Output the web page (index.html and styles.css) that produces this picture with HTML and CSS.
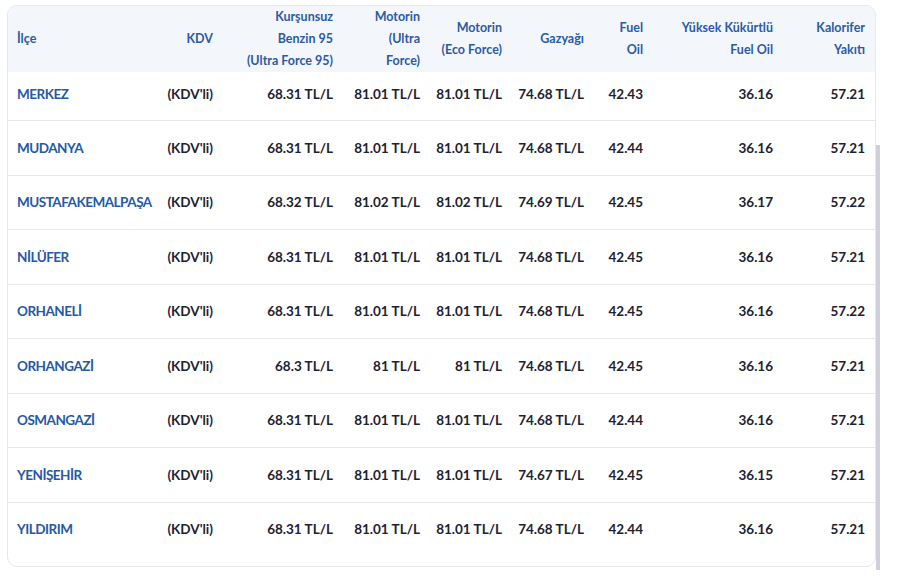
FILE: index.html
```html
<!DOCTYPE html>
<html lang="tr">
<head>
<meta charset="utf-8">
<title>Akaryakıt Fiyatları</title>
<link rel="stylesheet" href="styles.css">
</head>
<body>
<div class="page">
  <div class="card">
    <table class="prices">
      <colgroup>
        <col class="c1"><col class="c2"><col class="c3"><col class="c4"><col class="c5"><col class="c6"><col class="c7"><col class="c8"><col class="c9">
      </colgroup>
      <thead>
        <tr>
          <th class="left">İlçe</th>
          <th>KDV</th>
          <th>Kurşunsuz<br>Benzin 95<br>(Ultra Force 95)</th>
          <th>Motorin<br>(Ultra<br>Force)</th>
          <th>Motorin<br>(Eco Force)</th>
          <th>Gazyağı</th>
          <th>Fuel<br>Oil</th>
          <th>Yüksek Kükürtlü<br>Fuel Oil</th>
          <th>Kalorifer<br>Yakıtı</th>
        </tr>
      </thead>
      <tbody>
        <tr class="first"><td class="name">MERKEZ</td><td>(KDV'li)</td><td>68.31 TL/L</td><td>81.01 TL/L</td><td>81.01 TL/L</td><td>74.68 TL/L</td><td>42.43</td><td>36.16</td><td>57.21</td></tr>
        <tr><td class="name">MUDANYA</td><td>(KDV'li)</td><td>68.31 TL/L</td><td>81.01 TL/L</td><td>81.01 TL/L</td><td>74.68 TL/L</td><td>42.44</td><td>36.16</td><td>57.21</td></tr>
        <tr><td class="name">MUSTAFAKEMALPAŞA</td><td>(KDV'li)</td><td>68.32 TL/L</td><td>81.02 TL/L</td><td>81.02 TL/L</td><td>74.69 TL/L</td><td>42.45</td><td>36.17</td><td>57.22</td></tr>
        <tr><td class="name">NİLÜFER</td><td>(KDV'li)</td><td>68.31 TL/L</td><td>81.01 TL/L</td><td>81.01 TL/L</td><td>74.68 TL/L</td><td>42.45</td><td>36.16</td><td>57.21</td></tr>
        <tr><td class="name">ORHANELİ</td><td>(KDV'li)</td><td>68.31 TL/L</td><td>81.01 TL/L</td><td>81.01 TL/L</td><td>74.68 TL/L</td><td>42.45</td><td>36.16</td><td>57.22</td></tr>
        <tr><td class="name">ORHANGAZİ</td><td>(KDV'li)</td><td>68.3 TL/L</td><td>81 TL/L</td><td>81 TL/L</td><td>74.68 TL/L</td><td>42.45</td><td>36.16</td><td>57.21</td></tr>
        <tr><td class="name">OSMANGAZİ</td><td>(KDV'li)</td><td>68.31 TL/L</td><td>81.01 TL/L</td><td>81.01 TL/L</td><td>74.68 TL/L</td><td>42.44</td><td>36.16</td><td>57.21</td></tr>
        <tr><td class="name">YENİŞEHİR</td><td>(KDV'li)</td><td>68.31 TL/L</td><td>81.01 TL/L</td><td>81.01 TL/L</td><td>74.67 TL/L</td><td>42.45</td><td>36.15</td><td>57.21</td></tr>
        <tr class="last"><td class="name">YILDIRIM</td><td>(KDV'li)</td><td>68.31 TL/L</td><td>81.01 TL/L</td><td>81.01 TL/L</td><td>74.68 TL/L</td><td>42.44</td><td>36.16</td><td>57.21</td></tr>
      </tbody>
    </table>
  </div>
  <div class="scroll-track"><div class="scroll-thumb"></div></div>
</div>
</body>
</html>
```

FILE: styles.css
```css
html, body {
  margin: 0;
  padding: 0;
  background: #ffffff;
}
body {
  font-family: Lato, "Liberation Sans", sans-serif;
  color: #1d2230;
}
.page {
  display: flex;
  align-items: flex-start;
  padding: 5px 0 0 7px;
}
.card {
  width: 867px;
  border: 1px solid #e4e7ec;
  border-radius: 10px;
  overflow: hidden;
  padding-bottom: 10px;
  background: #fff;
}
.scroll-track {
  width: 4px;
  padding-top: 140px;
}
.scroll-thumb {
  width: 4px;
  height: 425px;
  background: #cfd0da;
}
.prices {
  width: 867px;
  table-layout: fixed;
  border-collapse: collapse;
}
.c1 { width: 152px; }
.c2 { width: 63px; }
.c3 { width: 120px; }
.c4 { width: 87px; }
.c5 { width: 82px; }
.c6 { width: 82px; }
.c7 { width: 59px; }
.c8 { width: 130px; }
.c9 { width: 92px; }
.prices thead tr {
  background: #f3f6fb;
}
.prices th {
  font-size: 12.5px;
  font-weight: 700;
  line-height: 22px;
  color: #2c5ba3;
  text-align: right;
  vertical-align: middle;
  padding: 0 10px 0 0;
  height: 66px;
}
.prices th.left {
  text-align: left;
  padding-left: 9px;
}
.prices td {
  font-size: 13.5px;
  font-weight: 700;
  text-align: right;
  vertical-align: middle;
  padding: 0 10px 0 0;
  height: 53.5px;
  border-bottom: 1px solid #e6e8ec;
  white-space: nowrap;
}
.prices td.name {
  text-align: left;
  padding-left: 9px;
  color: #2659a5;
  letter-spacing: -0.5px;
}
.prices tr.first td {
  height: 44px;
  padding-bottom: 4px;
}
.prices tr.last td {
  border-bottom: none;
}
```
